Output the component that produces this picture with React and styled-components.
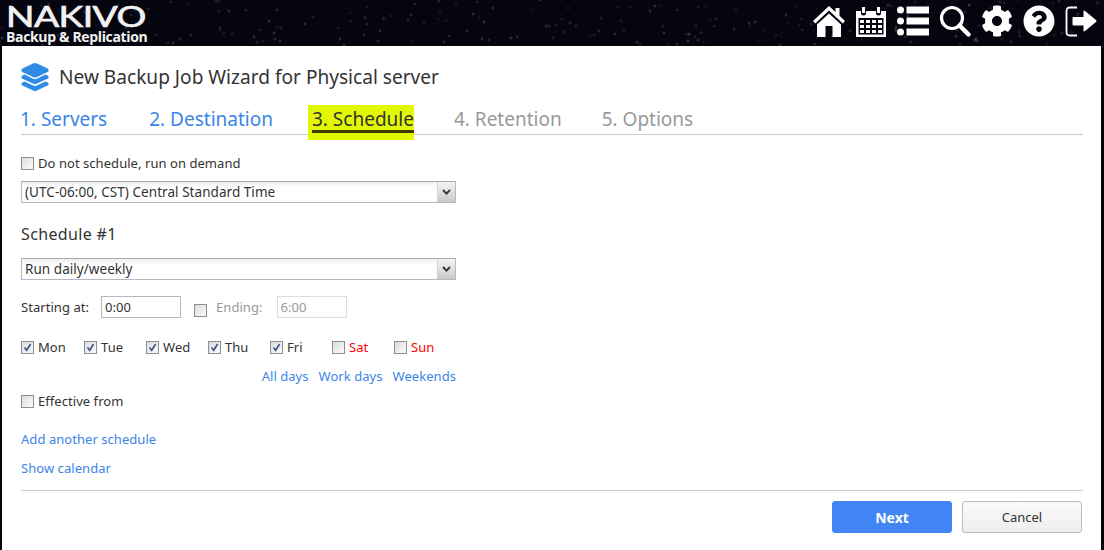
import React from 'react';
import styled, { createGlobalStyle } from 'styled-components';
import { FaCog, FaQuestionCircle } from 'react-icons/fa';

const GlobalStyle = createGlobalStyle`
  html, body { margin: 0; padding: 0; background: #05050f; }
  body {
    font-family: 'Noto Sans', Tahoma, sans-serif;
    font-size: 13px;
    letter-spacing: 0.05px;
    color: #333;
    overflow: hidden;
  }
`;

// the night-sky texture behind the header, seeded so it stays the same
let seed = 7;
const rnd = () => {
  seed = (seed * 16807) % 2147483647;
  return seed / 2147483647;
};
const stars = Array.from({ length: 220 }, () => {
  const x = Math.round(rnd() * 1104);
  const y = Math.round(rnd() * 46);
  const a = (0.12 + rnd() * 0.3).toFixed(2);
  return `radial-gradient(circle 2px at ${x}px ${y}px, rgba(150,150,165,${a}), transparent)`;
}).join(',');

const Page = styled.div`
  width: 1104px;
  height: 550px;
  display: flex;
  flex-direction: column;
  background-color: #05050f;
  background-image: ${stars};
`;

const Header = styled.header`
  height: 46px;
  flex: none;
  display: flex;
  justify-content: space-between;
  align-items: center;
  padding: 0 7px 0 6px;
`;

const Logo = styled.div`
  display: flex;
  flex-direction: column;
  color: #f1f1f1;
  width: 142px;
  height: 46px;
  padding-top: 3px;
  box-sizing: border-box;
  font-family: 'Lato', sans-serif;
`;

const LogoMain = styled.div`
  font-size: 28px;
  line-height: 27px;
  height: 27px;
  font-weight: 400;
  letter-spacing: -0.4px;
  -webkit-text-stroke: 0.7px #f1f1f1;
  transform: scale(1.33, 1);
  transform-origin: left center;
  white-space: nowrap;
`;

const LogoSub = styled.div`
  font-family: 'Open Sans', sans-serif;
  font-size: 14px;
  line-height: 14px;
  font-weight: 700;
  letter-spacing: -0.35px;
  white-space: nowrap;
`;

const IconBar = styled.nav`
  display: flex;
  align-items: center;
  gap: 10px;
  margin-bottom: 5px;
  color: #fff;
  svg { display: block; fill: currentColor; }
`;

const Panel = styled.main`
  flex: 1;
  margin: 0 3px 0 2px;
  padding: 0 18px 0 19px;
  background: #fff;
`;

const TitleRow = styled.div`
  height: 58px;
  display: flex;
  align-items: center;
  gap: 10px;
  padding-top: 3px;
  box-sizing: border-box;
`;

const Title = styled.h1`
  margin: 0;
  font-size: 19.1px;
  font-weight: 400;
  letter-spacing: 0;
  color: #333;
`;

const Tabs = styled.div`
  display: flex;
  height: 30px;
  margin-left: 0;
  border-bottom: 1px solid #ccc;
  font-size: 19px;
  letter-spacing: 0;
`;

const Tab = styled.div`
  position: relative;
  height: ${(p) => (p.$active ? '35px' : 'auto')};
  margin: 1px 0 0 ${(p) => p.$gap}px;
  padding-left: ${(p) => (p.$active ? '4px' : '0')};
  line-height: 28px;
  white-space: nowrap;
  color: ${(p) => (p.$active ? '#333' : p.$todo ? '#999' : '#3a85e8')};
  ${(p) => p.$active && `
    background: #e2f800;
    box-sizing: border-box;
    &::after {
      content: '';
      position: absolute;
      left: 4px; right: 0; top: 25px;
      height: 3px;
      background: #3d3c00;
    }
  `}
`;

const Form = styled.div`
  display: flex;
  flex-direction: column;
  width: 435px;
  padding-top: 19px;
`;

const CheckRow = styled.label`
  display: flex;
  align-items: center;
  gap: 4px;
  height: 18px;
  white-space: nowrap;
  color: ${(p) => (p.$red ? '#f00' : '#333')};
  margin-top: ${(p) => p.$top || 0}px;
`;

const Box = styled.span`
  flex: none;
  width: 13px;
  height: 13px;
  box-sizing: border-box;
  border: 1px solid #8e8e8e;
  background: linear-gradient(135deg, #dcdcdc, #fbfbfb);
  display: flex;
  align-items: center;
  justify-content: center;
  ${(p) => p.$low && 'margin-top: 6px;'}
`;

const Select = styled.div`
  height: 22px;
  box-sizing: border-box;
  margin-top: ${(p) => p.$top}px;
  border: 1px solid #b4b8c4;
  border-top-color: #a6a9b6;
  display: flex;
  align-items: center;
  justify-content: space-between;
  padding-left: 3px;
  font-size: 13.5px;
  background: linear-gradient(#f0f0f0, #fff 30%);
  color: #333;
`;

const SelectArrow = styled.span`
  width: 17px;
  height: 20px;
  background: linear-gradient(#f4f4f4, #c9c9c9);
  border-left: 1px solid #d4d4d4;
  display: flex;
  align-items: center;
  justify-content: center;
`;

const Subtitle = styled.h2`
  margin: 19px 0 0;
  height: 24px;
  line-height: 24px;
  font-size: 16px;
  font-weight: 400;
  letter-spacing: 0.35px;
  color: #333;
`;

const TimeRow = styled.div`
  display: flex;
  align-items: center;
  height: 22px;
  margin-top: 16px;
`;

const TimeLabel = styled.span`
  color: ${(p) => (p.$off ? '#999' : '#333')};
  margin-left: ${(p) => p.$ml || 0}px;
  margin-right: ${(p) => p.$mr}px;
`;

const TimeInput = styled.div`
  width: ${(p) => p.$w}px;
  height: 22px;
  box-sizing: border-box;
  border: 1px solid ${(p) => (p.$off ? '#ddd' : '#b4b8c4')};
  padding-left: 3px;
  line-height: 20px;
  margin-right: ${(p) => p.$mr || 0}px;
  color: ${(p) => (p.$off ? '#999' : '#333')};
`;

const Days = styled.div`
  display: grid;
  grid-template-columns: 63px repeat(6, 62px);
  margin-top: 20px;
`;

const QuickLinks = styled.div`
  display: flex;
  justify-content: flex-end;
  gap: 10px;
  margin-top: 11px;
`;

const Link = styled.a`
  display: block;
  color: #3a85e8;
  line-height: 18px;
  margin-top: ${(p) => p.$top || 0}px;
`;

const Rule = styled.div`
  height: 1px;
  background: #ccc;
  margin-top: 13px;
`;

const Footer = styled.div`
  display: flex;
  justify-content: flex-end;
  gap: 10px;
  padding: 10px 1px 0 0;
`;

const Button = styled.button`
  width: 120px;
  height: 32px;
  border-radius: 3px;
  font-family: inherit;
  padding: 0;
  ${(p) => p.$primary
    ? 'background: #4285f4; border: 1px solid #4285f4; color: #fff; font-size: 14px; font-weight: 700;'
    : 'background: linear-gradient(#fafafa, #eee); border: 1px solid #bbb; color: #333; font-size: 13px;'}
`;

const Check = () => (
  <svg width="9" height="9" viewBox="0 0 9 9">
    <path d="M1.5 4.5 L3.7 7.2 L7.6 1" fill="none" stroke="#45558c" strokeWidth="1.7" />
  </svg>
);

const Caret = () => (
  <svg width="9" height="6" viewBox="0 0 9 6">
    <path d="M1 1 L4.5 4.6 L8 1" fill="none" stroke="#333" strokeWidth="1.8" />
  </svg>
);

const HomeIcon = () => (
  <svg width="32" height="32" viewBox="0 0 32 32">
    <path d="M16 1 L22.5 7 V3 H26.5 V10.7 L32 16 L29.8 18.4 L16 5.6 L2.2 18.4 L0 16 Z" />
    <path d="M16 8.6 L28 19.4 V32 H19.5 V21 H12.5 V32 H4 V19.4 Z" />
  </svg>
);

const CalendarIcon = () => (
  <svg width="32" height="32" viewBox="0 0 32 32">
    <path
      fillRule="evenodd"
      d="M1 6 H6 V8 A2.5 2.5 0 0 0 11 8 V6 H21 V8 A2.5 2.5 0 0 0 26 8 V6 H31 V32 H1 Z M3.5 13 V29.5 H28.5 V13 Z"
    />
    <path d="M7 2 H10 V8 H7 Z M22 2 H25 V8 H22 Z" />
    <path d="M5 15 H9 V18 H5 Z M11 15 H15 V18 H11 Z M17 15 H21 V18 H17 Z M23 15 H27 V18 H23 Z M5 20 H9 V23 H5 Z M11 20 H15 V23 H11 Z M17 20 H21 V23 H17 Z M23 20 H27 V23 H23 Z M5 25 H9 V28 H5 Z M11 25 H15 V28 H11 Z M17 25 H21 V28 H17 Z M23 25 H27 V28 H23 Z" />
  </svg>
);

const ListIcon = () => (
  <svg width="32" height="32" viewBox="0 0 32 32">
    <circle cx="3.5" cy="5" r="3.5" />
    <circle cx="3.5" cy="16" r="3.5" />
    <circle cx="3.5" cy="27" r="3.5" />
    <path d="M9.5 1.5 H32 V8.5 H9.5 Z M9.5 12.5 H32 V19.5 H9.5 Z M9.5 23.5 H32 V30.5 H9.5 Z" />
  </svg>
);

const SearchIcon = () => (
  <svg width="32" height="32" viewBox="0 0 32 32">
    <circle cx="13" cy="13" r="10.5" fill="none" stroke="#fff" strokeWidth="3.2" />
    <path d="M20.5 20.5 L29.5 29.5" stroke="#fff" strokeWidth="4.4" strokeLinecap="round" />
  </svg>
);

const ExitIcon = () => (
  <svg width="32" height="32" viewBox="0 0 32 32">
    <path d="M12 2.5 H5 Q1.5 2.5 1.5 6 V27 Q1.5 30.5 5 30.5 H12" fill="none" stroke="#fff" strokeWidth="1.8" />
    <path d="M8.5 12 H18.5 V6.5 Q18.5 5 20 6 L31 15 Q32 16 31 17 L20 26 Q18.5 27 18.5 25.5 V20.5 H8.5 Q7.5 20.5 7.5 19.5 V13 Q7.5 12 8.5 12 Z" />
  </svg>
);

const StackIcon = () => (
  <svg width="28" height="30" viewBox="0 0 28 30" fill="#2f8be6">
    <path d="M14 1 Q15 1 16 1.6 L26.6 6.6 Q27.6 7.4 27.6 8.4 Q27.6 9.4 26.6 10 L16 15 Q14 16 12 15 L1.4 10 Q0.4 9.4 0.4 8.4 Q0.4 7.4 1.4 6.6 L12 1.6 Q13 1 14 1 Z" />
    <path d="M3.6 12.6 L11.6 16.4 Q14 17.6 16.4 16.4 L24.4 12.6 L26.6 13.6 Q27.6 14.2 27.6 15.2 Q27.6 16.2 26.6 16.8 L16 21.6 Q14 22.6 12 21.6 L1.4 16.8 Q0.4 16.2 0.4 15.2 Q0.4 14.2 1.4 13.6 Z" />
    <path d="M3.6 19.4 L11.6 23.2 Q14 24.4 16.4 23.2 L24.4 19.4 L26.6 20.4 Q27.6 21 27.6 22 Q27.6 23 26.6 23.6 L16 28.4 Q14 29.4 12 28.4 L1.4 23.6 Q0.4 23 0.4 22 Q0.4 21 1.4 20.4 Z" />
  </svg>
);

const days = [
  { name: 'Mon', on: true },
  { name: 'Tue', on: true },
  { name: 'Wed', on: true },
  { name: 'Thu', on: true },
  { name: 'Fri', on: true },
  { name: 'Sat', red: true },
  { name: 'Sun', red: true },
];

export default function App() {
  return (
    <Page>
      <GlobalStyle />
      <Header>
        <Logo>
          <LogoMain>NAKIVO</LogoMain>
          <LogoSub>Backup &amp; Replication</LogoSub>
        </Logo>
        <IconBar>
          <HomeIcon />
          <CalendarIcon />
          <ListIcon />
          <SearchIcon />
          <FaCog size={32} />
          <FaQuestionCircle size={32} />
          <ExitIcon />
        </IconBar>
      </Header>
      <Panel>
        <TitleRow>
          <StackIcon />
          <Title>New Backup Job Wizard for Physical server</Title>
        </TitleRow>
        <Tabs>
          <Tab $gap={-1}>1. Servers</Tab>
          <Tab $gap={42}>2. Destination</Tab>
          <Tab $gap={35} $active>3. Schedule</Tab>
          <Tab $gap={40} $todo>4. Retention</Tab>
          <Tab $gap={40} $todo>5. Options</Tab>
        </Tabs>
        <Form>
          <CheckRow><Box />Do not schedule, run on demand</CheckRow>
          <Select $top={9}>
            (UTC-06:00, CST) Central Standard Time
            <SelectArrow><Caret /></SelectArrow>
          </Select>
          <Subtitle>Schedule #1</Subtitle>
          <Select $top={12}>
            Run daily/weekly
            <SelectArrow><Caret /></SelectArrow>
          </Select>
          <TimeRow>
            <TimeLabel $mr={12}>Starting at:</TimeLabel>
            <TimeInput $w={80} $mr={13}>0:00</TimeInput>
            <Box $low />
            <TimeLabel $off $ml={9} $mr={14}>Ending:</TimeLabel>
            <TimeInput $w={70} $off>6:00</TimeInput>
          </TimeRow>
          <Days>
            {days.map((d) => (
              <CheckRow key={d.name} $red={d.red}>
                <Box>{d.on && <Check />}</Box>
                {d.name}
              </CheckRow>
            ))}
          </Days>
          <QuickLinks>
            <Link>All days</Link>
            <Link>Work days</Link>
            <Link>Weekends</Link>
          </QuickLinks>
          <CheckRow $top={7}><Box />Effective from</CheckRow>
          <Link $top={20}>Add another schedule</Link>
          <Link $top={11}>Show calendar</Link>
        </Form>
        <Rule />
        <Footer>
          <Button $primary>Next</Button>
          <Button>Cancel</Button>
        </Footer>
      </Panel>
    </Page>
  );
}
